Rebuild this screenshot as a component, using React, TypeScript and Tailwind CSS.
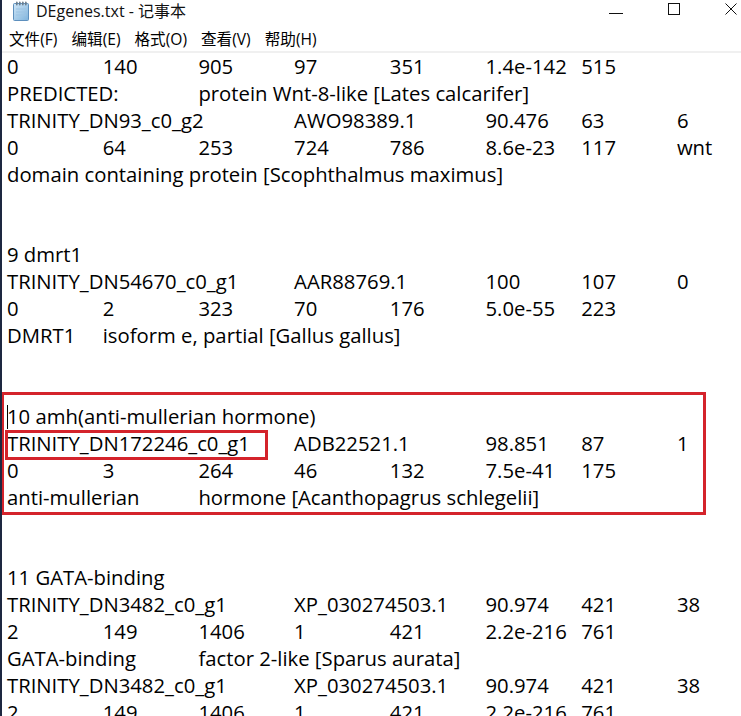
import React from "react";

const lines = [
  "0\t140\t905\t97\t351\t1.4e-142\t515",
  "PREDICTED:\tprotein Wnt-8-like [Lates calcarifer]",
  "TRINITY_DN93_c0_g2\tAWO98389.1\t90.476\t63\t6",
  "0\t64\t253\t724\t786\t8.6e-23\t117\twnt",
  "domain containing protein [Scophthalmus maximus]",
  "",
  "",
  "9 dmrt1",
  "TRINITY_DN54670_c0_g1\tAAR88769.1\t100\t107\t0",
  "0\t2\t323\t70\t176\t5.0e-55\t223",
  "DMRT1\tisoform e, partial [Gallus gallus]",
  "",
  "",
  "CARET",
  "TRINITY_DN172246_c0_g1\tADB22521.1\t98.851\t87\t1",
  "0\t3\t264\t46\t132\t7.5e-41\t175",
  "anti-mullerian\thormone [Acanthopagrus schlegelii]",
  "",
  "",
  "11 GATA-binding",
  "TRINITY_DN3482_c0_g1\tXP_030274503.1\t90.974\t421\t38",
  "2\t149\t1406\t1\t421\t2.2e-216\t761",
  "GATA-binding\tfactor 2-like [Sparus aurata]",
  "TRINITY_DN3482_c0_g1\tXP_030274503.1\t90.974\t421\t38",
  "2\t149\t1406\t1\t421\t2.2e-216\t761",
];

const NotepadIcon = () => (
  <svg width="18" height="20" viewBox="0 0 18 20">
    <defs>
      <linearGradient id="pad" x1="0" y1="0" x2="1" y2="1">
        <stop offset="0" stopColor="#cfe6f7" />
        <stop offset="1" stopColor="#7fb3dc" />
      </linearGradient>
    </defs>
    <rect x="1.5" y="2.5" width="15" height="17" rx="1" fill="url(#pad)" stroke="#5d8fbd" />
    <line x1="4" y1="8" x2="14" y2="8" stroke="#9cc3e3" />
    <line x1="4" y1="11" x2="14" y2="11" stroke="#9cc3e3" />
    <line x1="4" y1="14" x2="14" y2="14" stroke="#9cc3e3" />
    {[4, 7, 10, 13].map((x) => (
      <rect key={x} x={x} y="0.5" width="1.6" height="4" rx="0.8" fill="#6b7c8c" />
    ))}
  </svg>
);

const Controls = () => (
  <div className="ml-auto flex items-center gap-[45px] mr-[4px] self-start mt-[3px]">
    <svg width="14" height="12" viewBox="0 0 14 12">
      <line x1="0" y1="10.5" x2="14" y2="10.5" stroke="#111" strokeWidth="1" />
    </svg>
    <svg width="12" height="12" viewBox="0 0 12 12">
      <rect x="0.5" y="0.5" width="11" height="11" fill="none" stroke="#111" strokeWidth="1" />
    </svg>
    <svg width="12" height="12" viewBox="0 0 12 12">
      <path d="M0.5 0.5 L11.5 11.5 M11.5 0.5 L0.5 11.5" stroke="#111" strokeWidth="1" />
    </svg>
  </div>
);

const menus = ["文件(F)", "编辑(E)", "格式(O)", "查看(V)", "帮助(H)"];

export default function App() {
  return (
    <div className="relative w-[741px] h-[716px] overflow-hidden bg-white border-l-2 border-[#1d2740] text-black">
      <div className="h-[29px] flex">
        <div className="flex items-center h-[22px] pl-[10px] gap-[6px]">
          <NotepadIcon />
          <span className="text-[16px] text-[#111] font-['Open_Sans','Noto_Sans_CJK_SC',sans-serif]">
            DEgenes.txt - 记事本
          </span>
        </div>
        <Controls />
      </div>
      <div className="h-[22px] flex items-center gap-[14px] pl-[7px] text-[15.6px] font-['Open_Sans','Noto_Sans_CJK_SC',sans-serif]">
        {menus.map((m) => (
          <span key={m}>{m}</span>
        ))}
      </div>
      <div className="h-[2px] bg-[#f0f0f0]" />
      <pre className="pl-[5px] whitespace-pre text-[20.3px] leading-[26.9px] [tab-size:95.7px] text-black font-['Open_Sans','Noto_Sans_CJK_SC',sans-serif]">
        {lines.map((l, i) =>
          l === "CARET" ? (
            <div key={i}>
              <span className="inline-block w-px h-[24px] bg-black align-[-5px] -mr-px" />
              10 amh(anti-mullerian hormone)
            </div>
          ) : (
            <div key={i}>{l === "" ? "\u00a0" : l}</div>
          )
        )}
      </pre>
      <div className="absolute left-[-1px] top-[392px] w-[705px] h-[123px] border-[3px] border-[#d4232b]" />
      <div className="absolute left-[3px] top-[430px] w-[263px] h-[30px] border-[3px] border-[#d4232b]" />
    </div>
  );
}
